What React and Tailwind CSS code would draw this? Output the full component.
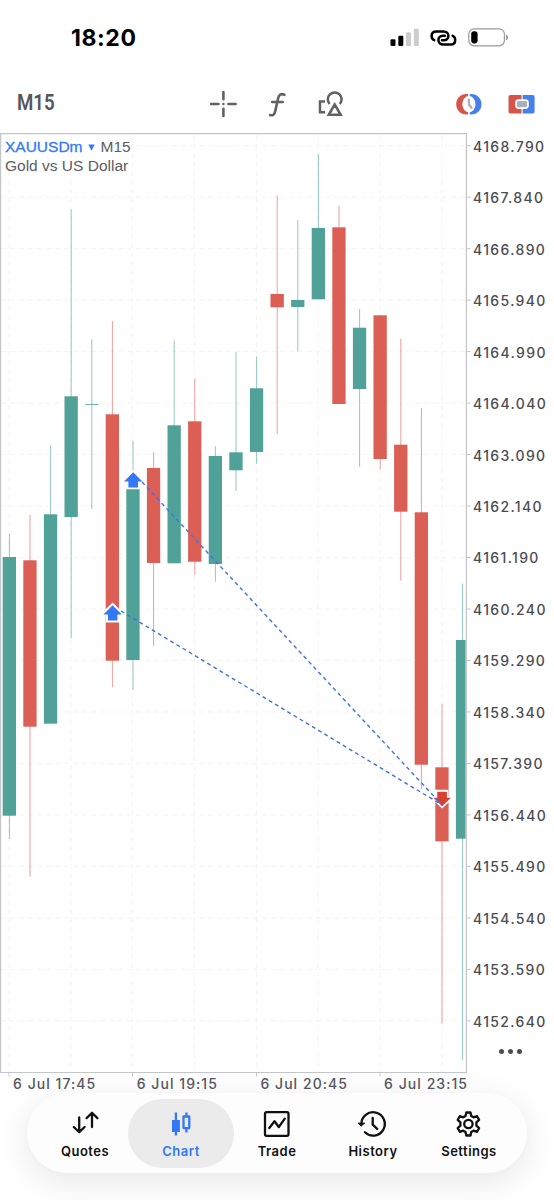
import React from 'react';
import clsx from 'clsx';

const UP = '#50a298';
const DOWN = '#dc5f56';
const STEP = 20.6;

const prices = [
  '4168.790', '4167.840', '4166.890', '4165.940', '4164.990', '4164.040',
  '4163.090', '4162.140', '4161.190', '4160.240', '4159.290', '4158.340',
  '4157.390', '4156.440', '4155.490', '4154.540', '4153.590', '4152.640',
];

const times = ['6 Jul 17:45', '6 Jul 19:15', '6 Jul 20:45', '6 Jul 23:15'];

// [side, high, body top, body bottom, low]
const candles = [
  ['up', 401, 424, 682.7, 706],
  ['down', 381.7, 427.3, 593.7, 743.7],
  ['up', 312.3, 381.3, 590.7, 590.7],
  ['up', 76.3, 263.3, 384, 505.3],
  ['up', 206.3, 271, 271.8, 376],
  ['down', 188, 281.3, 527.7, 554.3],
  ['up', 307.7, 341, 527, 557],
  ['down', 318.7, 335, 430, 512.7],
  ['up', 207.3, 292.3, 430.3, 430.3],
  ['down', 245.7, 288.3, 428.7, 442],
  ['up', 313.3, 323, 431, 448.7],
  ['up', 219, 319.3, 337.3, 358],
  ['up', 223.7, 255.3, 319, 330.7],
  ['down', 62.3, 161, 174.3, 301],
  ['up', 87, 167, 174, 218.3],
  ['up', 21, 95, 166.3, 166.3],
  ['down', 72.7, 94.3, 271, 271],
  ['up', 176, 194.7, 256, 333.7],
  ['down', 182.3, 182.3, 326, 336.3],
  ['down', 205.7, 311.7, 378.7, 447.7],
  ['down', 275, 379.3, 631.7, 656.3],
  ['down', 570.7, 634.3, 708.3, 890.7],
  ['up', 450.7, 507, 705.7, 927],
];

function Chart() {
  return (
    <svg width="472" height="945" viewBox="0 0 472 945" className="block">
      <g stroke="#f4f4f5" strokeWidth="1" strokeDasharray="5 4">
        {[9, 71, 132.5, 194.5, 256.5, 318, 380, 442].map(x => (
          <line key={x} x1={x} y1="2" x2={x} y2="939" />
        ))}
        {prices.map((p, i) => (
          <line key={p} x1="1" y1={12.7 + i * 51.48} x2="466" y2={12.7 + i * 51.48} />
        ))}
      </g>

      <clipPath id="plot"><rect x="0" y="0" width="465.6" height="940" /></clipPath>
      <g clipPath="url(#plot)">
        {candles.map(([side, high, top, bottom, low], i) => {
          const x = 9.4 + i * STEP;
          const color = side === 'up' ? UP : DOWN;
          return (
            <g key={i}>
              <line x1={x} x2={x} y1={high} y2={low} stroke={color} strokeWidth="1" strokeOpacity="0.6" />
              <rect x={x - 6.7} y={top} width="13.3" height={bottom - top} fill={color} />
            </g>
          );
        })}
      </g>

      {/* Deals */}
      <path d="M133 336.5l9.8 9.7v2h-3v8h-13.8v-8h-2.8v-2z" fill="#fff" />
      <rect x="126" y="341" width="14" height="14.8" fill="#fff" />
      <path d="M112.6 469.5l10.2 10v3h-3.4v7h-13.7v-7h-3.3v-3z" fill="#fff" />
      <path d="M434.4 656.7h14v6h4.3v3l-10.6 9.8-8-7.5z" fill="#fff" />
      <path d="M133.2 339.2l9.2 9.2h-4.4v6h-9.6v-6h-4.4z" fill="#3478f6" />
      <path d="M112.6 472.2l9.2 9.4h-4.4v6H108v-6h-4.6z" fill="#3478f6" />
      <path d="M437.3 658.8h9.6v6h4l-8.7 8.4-8.7-8.4h3.8z" fill="#d8412f" />
      <g stroke="#4070e8" strokeWidth="1.4" strokeDasharray="3.9 3.3">
        <line x1="142" y1="349" x2="442" y2="672" />
        <line x1="121" y1="478" x2="442" y2="672" />
      </g>

      {/* Frame and axis ticks */}
      <path d="M.6 939V.7h465.8v938.8H0" fill="none" stroke="#c3c5c9" strokeWidth="1.2" />
      <g stroke="#c3c5c9" strokeWidth="1">
        {prices.map((p, i) => (
          <line key={p} x1="466" y1={12.7 + i * 51.48} x2="470.5" y2={12.7 + i * 51.48} />
        ))}
        {[9, 132.5, 256.5, 380].map(x => (
          <line key={x} x1={x} y1="939" x2={x} y2="943.5" />
        ))}
      </g>
    </svg>
  );
}

function StatusBar() {
  return (
    <div className="flex h-[76px] items-center">
      <div className="ml-[71px] w-[319px] text-[23px] font-bold leading-none tracking-[.6px] text-black">18:20</div>
      <svg width="120" height="20" viewBox="390 28 120 20">
        <rect x="390.5" y="39.3" width="5" height="6.8" rx="1.3" />
        <rect x="398.3" y="35.8" width="5" height="10.3" rx="1.3" />
        <g fill="#ccc">
          <rect x="406" y="32.2" width="5" height="13.9" rx="1.3" />
          <rect x="413.8" y="28.7" width="5" height="17.4" rx="1.3" />
        </g>
        <g fill="none" stroke="#000" strokeWidth="2.5" strokeLinecap="round">
          <path d="M434.2 40.2c-1.6-.6-2.6-2.2-2.6-4.1 0-2.9 2-4.7 4.8-4.7h7c3 0 5 1.9 5 4.5s-1.9 4.3-4.5 4.3h-1.9" />
          <path d="M452.6 35.8c1.6.6 2.6 2.2 2.6 4.1 0 2.9-2 4.7-4.8 4.7h-7c-3 0-5-1.9-5-4.5s1.9-4.3 4.5-4.3h1.9" />
        </g>
        <rect x="468.8" y="28.8" width="35.6" height="17" rx="5.3" fill="#fff" stroke="#999" strokeWidth="1.2" />
        <rect x="471.2" y="31.2" width="6.4" height="12.2" rx="2.8" />
        <path d="M506 34.6c1.4.4 2 1.5 2 2.8s-.6 2.4-2 2.8z" fill="#999" />
      </svg>
    </div>
  );
}

function Toolbar() {
  return (
    <div className="flex h-[57px] items-center pb-px">
      <div className="ml-[17px] w-[188px]">
        <span className="inline-block origin-left scale-x-[.87] font-['Roboto',sans-serif] text-[21.5px] font-semibold leading-none text-[#55565a]">M15</span>
      </div>
      {/* Crosshair, indicators, objects */}
      <svg width="150" height="34" viewBox="205 87 150 34" fill="none" stroke="#616266">
        <path d="M223.4 92v7.2M223.4 108.8v7.2M211.2 104h7.2M228.4 104h7.2" strokeWidth="2.6" strokeLinecap="round" />
        <circle cx="223.4" cy="104" r="1.3" fill="#616266" stroke="none" />
        <path d="M284.4 94.7c-3.8-1.6-5.6.4-6.4 4l-2.8 12.7c-.7 3-2.2 4.5-5.2 3.6M272.2 102h10.5" strokeWidth="2.6" strokeLinecap="round" />
        <path d="M325 101.4h-5v10.8h5M329.6 104a6.9 6.9 0 1 1 10.2 0M334.7 104.5l-6 10.3h12z" strokeWidth="2.5" />
      </svg>
      <svg width="84" height="24" viewBox="452 92 84 24" className="ml-[97px]">
        <path d="M468 94v4.4c-2 .7-3 2.8-3 5.8s1 5.1 3 5.8v4.4h-1.6c-6 0-10.2-4.6-10.2-10.2S460.400 94 466.400 94z" fill="#d5544b" />
        <path d="M469.700 94v4.400c2 .7 3 2.800 3 5.800s-1 5.100-3 5.800v4.400h1.600c6 0 10.200-4.600 10.200-10.200S477.300 94 471.300 94z" fill="#4580ec" />
        <ellipse cx="468.900" cy="104.200" rx="6.600" ry="8.200" fill="#fff" />
        <path d="M468.900 98.800v5.600l3.100 4.200" fill="none" stroke="#a9b0bb" strokeWidth="2.400" strokeLinejoin="round" />
        <path d="M510.500 95h11v18.600h-11a2 2 0 0 1-2-2V97a2 2 0 0 1 2-2z" fill="#d5544b" />
        <path d="M522.600 95h10a2 2 0 0 1 2 2v14.600a2 2 0 0 1-2 2h-10z" fill="#4580ec" />
        <rect x="516" y="100.200" width="12" height="8" rx="2.600" fill="#a9b0bb" stroke="#fff" strokeWidth="1.700" />
      </svg>
    </div>
  );
}

const tabs = [
  {
    name: 'Quotes',
    icon: <path d="M8.200 7.500v14.700M2.800 17l5.400 5.300 5.400-5.300M21 17V2.800M15.600 8.100L21 2.800l5.400 5.300" strokeWidth="2.300" />,
  },
  {
    name: 'Chart',
    active: true,
    icon: (
      <>
        <path d="M8.900 2.500v23M19.400 2.500v3.200M19.400 18.500v4" strokeWidth="2.300" strokeLinecap="butt" />
        <rect x="5" y="10" width="7.900" height="12" fill="currentColor" stroke="none" />
        <rect x="16.500" y="6.500" width="5.800" height="11.600" strokeWidth="2.300" />
      </>
    ),
  },
  {
    name: 'Trade',
    icon: (
      <>
        <rect x="2" y="2.200" width="23.500" height="23.600" rx="1.500" strokeWidth="2.300" />
        <path d="M6.300 18l5.200-6.800 4.300 5.800 6-8.400" strokeWidth="2.300" />
      </>
    ),
  },
  {
    name: 'History',
    icon: (
      <>
        <path d="M2.400 14.300a11.700 11.700 0 1 1 3.500 8" strokeWidth="2.300" />
        <path d="M-.6 13.100h6.200l-3.100 2.700z" fill="currentColor" strokeWidth="1" />
        <path d="M13.700 8v6.600l4.500 4.300" strokeWidth="2.300" />
      </>
    ),
  },
  {
    name: 'Settings',
    icon: (
      <>
        <path d="M11.300 2.500h4.200l.8 3.500 2.200 1.300 3.500-1.100 2.100 3.700-2.700 2.400v3.400l2.700 2.400-2.100 3.700-3.500-1.100-2.200 1.300-.8 3.500h-4.200l-.8-3.500-2.200-1.300-3.500 1.100-2.100-3.700 2.700-2.400v-3.400L2.700 9.900l2.100-3.700 3.500 1.100L10.500 6z" strokeWidth="2.300" />
        <circle cx="13.400" cy="14" r="4.200" strokeWidth="2.300" />
      </>
    ),
  },
];

function TabBar() {
  return (
    <nav className="ml-[27px] flex h-20 w-[500px] items-center rounded-full bg-[#fdfdfd] px-[5px] shadow-[0_8px_34px_rgba(0,0,0,0.10)]">
      {tabs.map(({ name, icon, active }) => (
        <div
          key={name}
          className={clsx(
            'flex h-[69px] w-[106px] shrink-0 flex-col items-center rounded-[35px] pt-[11px]',
            name !== 'Quotes' && '-ml-[10px]',
            active ? 'bg-[#ebebec] text-[#3478f6]' : 'text-[#111]'
          )}
        >
          <svg width="28" height="28" viewBox="0 0 28 28" fill="none" stroke="currentColor" strokeLinecap="round" strokeLinejoin="round" className="overflow-visible">
            {icon}
          </svg>
          <span className="mt-[5px] text-[13px] font-semibold leading-4 tracking-[.5px]">{name}</span>
        </div>
      ))}
    </nav>
  );
}

export default function App() {
  return (
    <div className="h-[1200px] w-[554px] overflow-hidden bg-white font-['Inter',sans-serif]">
      <StatusBar />
      <Toolbar />
      <div className="flex h-[941px]">
        <div className="relative w-[472px] shrink-0">
          <Chart />
          <div className="absolute left-[5px] top-[4px] font-['Liberation_Sans',sans-serif] text-[15.5px] leading-[19px] text-[#5b5d63]">
            <div className="flex items-center">
              <span className="text-[#3478f6] [-webkit-text-stroke:.3px_#3478f6]">XAUUSDm</span>
              <svg width="7" height="7" viewBox="0 0 7 7" className="ml-[5px] mr-[6px] mt-px"><path d="M.3.6h6.400L3.500 6.800z" fill="#3478f6" /></svg>
              <span>M15</span>
            </div>
            <div>Gold vs US Dollar</div>
          </div>
        </div>
        <div className="-mt-[12px] flex flex-col pl-px text-[14px] font-medium tracking-[1.35px] text-[#4b4c52]">
          {prices.map(p => (
            <div key={p} className="flex h-[51.48px] shrink-0 items-center leading-none">{p}</div>
          ))}
          <div className="ml-[26px] mt-[2px] flex gap-[4px]">
            <span className="size-[5px] rounded-full bg-[#4b4c52]" />
            <span className="size-[5px] rounded-full bg-[#4b4c52]" />
            <span className="size-[5px] rounded-full bg-[#4b4c52]" />
          </div>
        </div>
      </div>
      <div className="flex h-[19px] items-center pl-[13px] text-[14px] font-medium leading-none tracking-[1.05px] text-[#55565c]">
        {times.map(t => <span key={t} className="w-[123.7px] shrink-0 whitespace-nowrap">{t}</span>)}
      </div>
      <TabBar />
    </div>
  );
}
